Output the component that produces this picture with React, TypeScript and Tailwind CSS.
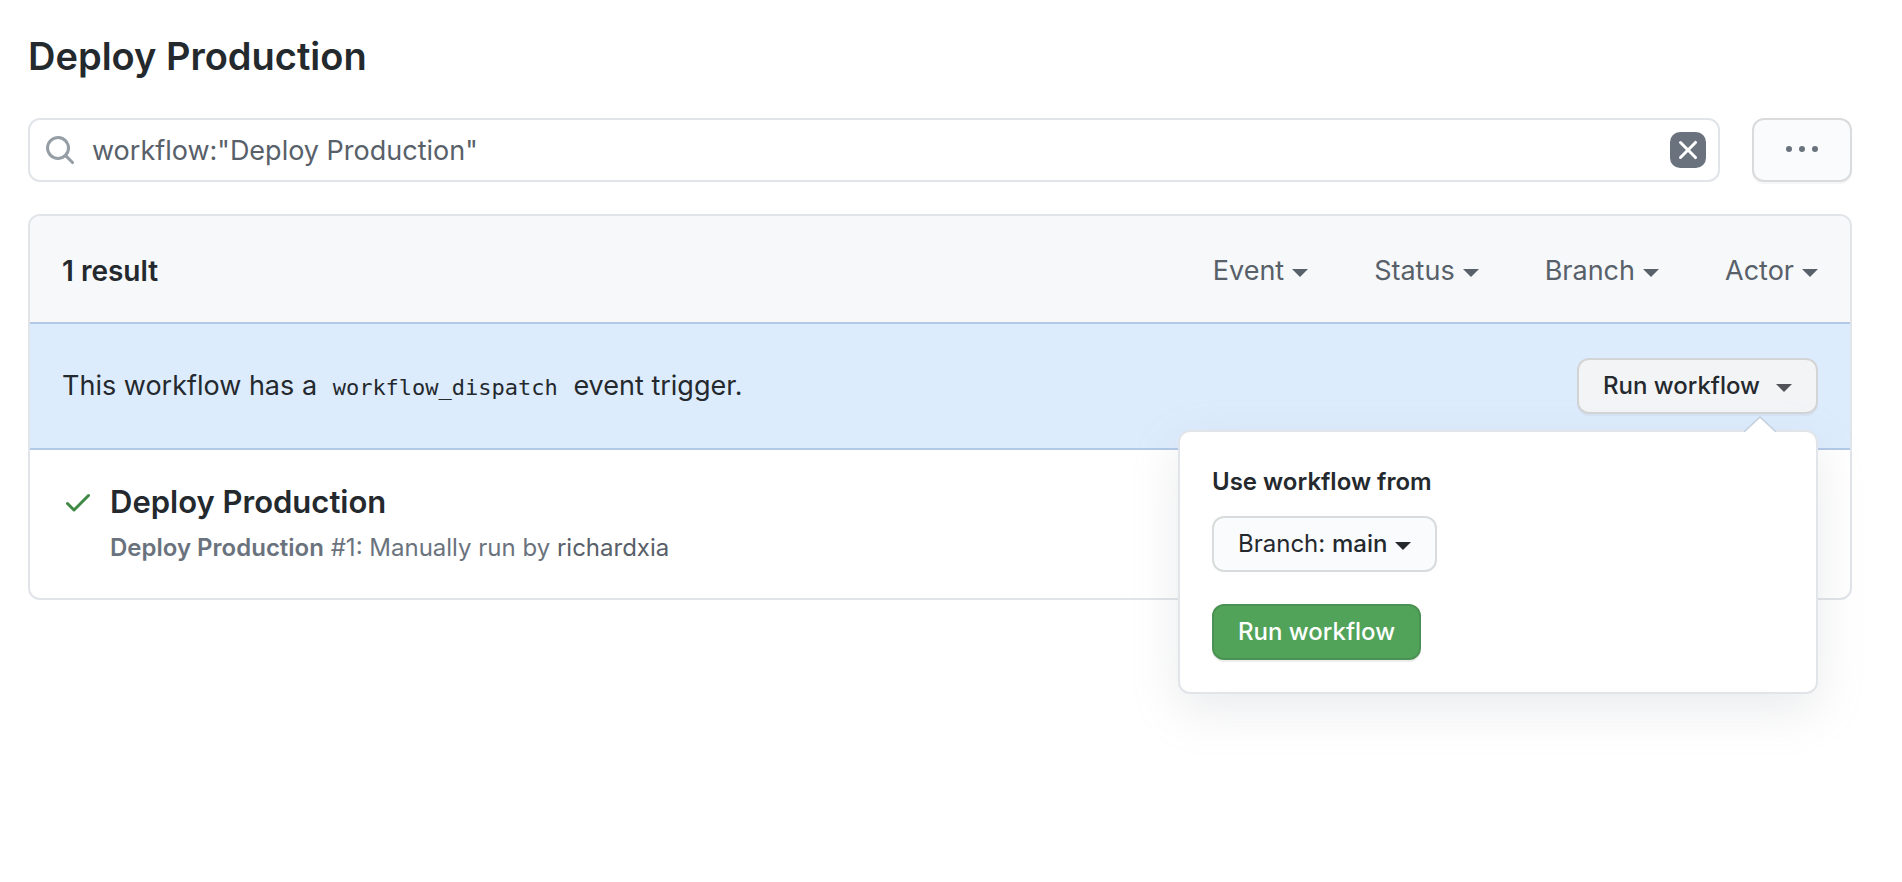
import { useState } from "react";

const filters = ["Event", "Status", "Branch", "Actor"];

function Icon({ d, className = "" }: { d: string; className?: string }) {
  return (
    <svg viewBox="0 0 16 16" aria-hidden="true" className={`size-8 shrink-0 fill-current ${className}`}>
      <path fillRule="evenodd" d={d} />
    </svg>
  );
}

const icons = {
  search:
    "M11.5 7a4.499 4.499 0 11-8.998 0A4.499 4.499 0 0111.5 7zm-.82 4.74a6 6 0 111.06-1.06l3.04 3.04a.75.75 0 11-1.06 1.06l-3.04-3.04z",
  x: "M3.72 3.72a.75.75 0 011.06 0L8 6.94l3.22-3.22a.75.75 0 111.06 1.06L9.06 8l3.22 3.22a.75.75 0 11-1.06 1.06L8 9.06l-3.22 3.22a.75.75 0 01-1.06-1.06L6.94 8 3.72 4.78a.75.75 0 010-1.06z",
  kebab:
    "M8 9a1.5 1.5 0 100-3 1.5 1.5 0 000 3zM1.5 9a1.5 1.5 0 100-3 1.5 1.5 0 000 3zm13 0a1.5 1.5 0 100-3 1.5 1.5 0 000 3z",
  check:
    "M13.78 4.22a.75.75 0 010 1.06l-7.25 7.25a.75.75 0 01-1.06 0L2.22 9.28a.75.75 0 011.06-1.06L6 10.94l6.72-6.72a.75.75 0 011.06 0z",
};

function Caret() {
  return (
    <svg viewBox="0 0 16 8" aria-hidden="true" className="mt-1 h-2 w-4 shrink-0 fill-current">
      <path d="M0 0h16L8 8z" />
    </svg>
  );
}

export default function App() {
  const [query, setQuery] = useState('workflow:"Deploy Production"');
  const [open, setOpen] = useState(true);

  return (
    <main className="min-h-screen bg-white pt-8 pr-[50px] pb-8 pl-7 font-['Inter','Liberation_Sans',sans-serif] text-[27px] leading-10 text-[#24292e]">
      <h1 className="text-[38px] leading-12 font-semibold">Deploy Production</h1>

      <div className="mt-[38px] flex gap-8">
        <div className="flex h-16 min-w-0 flex-1 items-center rounded-xl border-2 border-[#e1e4e8] pr-3 pl-3.5">
          <label htmlFor="run-search" className="text-[#959da5]">
            <Icon d={icons.search} />
          </label>
          <input
            id="run-search"
            type="text"
            aria-label="Filter workflow runs"
            value={query}
            onChange={(e) => setQuery(e.target.value)}
            className="ml-4 min-w-0 flex-1 pt-0.5 text-[#586069] outline-none"
          />
          <button
            type="button"
            aria-label="Clear filter"
            onClick={() => setQuery("")}
            className="flex size-9 items-center justify-center rounded-[10px] bg-[#6a737d] text-white"
          >
            <Icon d={icons.x} />
          </button>
        </div>
        <button
          type="button"
          aria-label="More options"
          className="flex h-16 w-[100px] items-center justify-center rounded-xl border-2 border-[#d9dbdc] bg-[#fafbfc] text-[#6a737d] shadow-[0_2px_0_rgba(27,31,35,0.04)]"
        >
          <Icon d={icons.kebab} />
        </button>
      </div>

      <section className="mt-8 rounded-xl border-2 border-[#e1e4e8]">
        <header className="flex h-[106px] items-center justify-between rounded-t-[10px] bg-[#f6f8fa] px-8 pt-1">
          <h2 className="text-[28px] font-semibold">1 result</h2>
          <div className="flex gap-[66px] text-[#586069]">
            {filters.map((name) => (
              <button key={name} type="button" aria-haspopup="menu" className="flex items-center gap-2">
                {name}
                <Caret />
              </button>
            ))}
          </div>
        </header>

        <div className="flex items-center justify-between border-y-2 border-[#b3c9e8] bg-[#ddecfd] px-8 py-[34px]">
          <p className="pt-0.5">
            This workflow has a <code className="mx-2 font-['DejaVu_Sans_Mono',monospace] text-[22px]">workflow_dispatch</code>{" "}
            event trigger.
          </p>
          <div className="relative">
            <button
              type="button"
              aria-expanded={open}
              onClick={() => setOpen(!open)}
              className="flex h-14 items-center gap-4 rounded-xl border-2 border-[#d2d4d6] bg-[#f3f4f6] px-6 text-2xl font-medium shadow-[0_2px_0_rgba(27,31,35,0.04)]"
            >
              Run workflow
              <span className="text-[#4f5358]">
                <Caret />
              </span>
            </button>
            {open && (
              <div className="absolute top-full right-0 z-10 mt-4 w-[640px] rounded-xl border-2 border-[#e1e4e8] bg-white p-8 shadow-[0_16px_48px_rgba(149,157,165,0.2)]">
                <svg viewBox="0 0 32 16" aria-hidden="true" className="absolute right-10 bottom-full h-4 w-8">
                  <path d="M0 16L16 1L32 16z" fill="#fff" />
                  <path d="M0 16L16 1L32 16" fill="none" stroke="#c3cfdd" strokeWidth="1.5" />
                </svg>
                <h3 className="text-2xl leading-9 font-semibold">Use workflow from</h3>
                <button
                  type="button"
                  aria-haspopup="listbox"
                  className="mt-4 flex h-14 items-center gap-2 rounded-xl border-2 border-[#d9dbdc] bg-[#fafbfc] px-6 text-2xl"
                >
                  <span>
                    Branch: <span className="font-medium">main</span>
                  </span>
                  <Caret />
                </button>
                <button
                  type="button"
                  className="mt-8 flex h-14 items-center rounded-xl border-2 border-[#4b9151] bg-[#52a35a] px-6 text-2xl font-medium text-white shadow-[0_2px_0_rgba(27,31,35,0.08)]"
                >
                  Run workflow
                </button>
              </div>
            )}
          </div>
        </div>

        <article className="flex gap-4 p-8">
          <Icon d={icons.check} className="mt-1 text-[#3f8843]" />
          <div>
            <h3 className="text-[31px] leading-10 font-semibold">
              <a href="#run">Deploy Production</a>
            </h3>
            <p className="mt-2 text-2xl leading-9 text-[#6a737d]">
              <span className="font-semibold">Deploy Production</span> #1: Manually run by{" "}
              <a href="#author" className="text-[#586069]">
                richardxia
              </a>
            </p>
          </div>
        </article>
      </section>
    </main>
  );
}
